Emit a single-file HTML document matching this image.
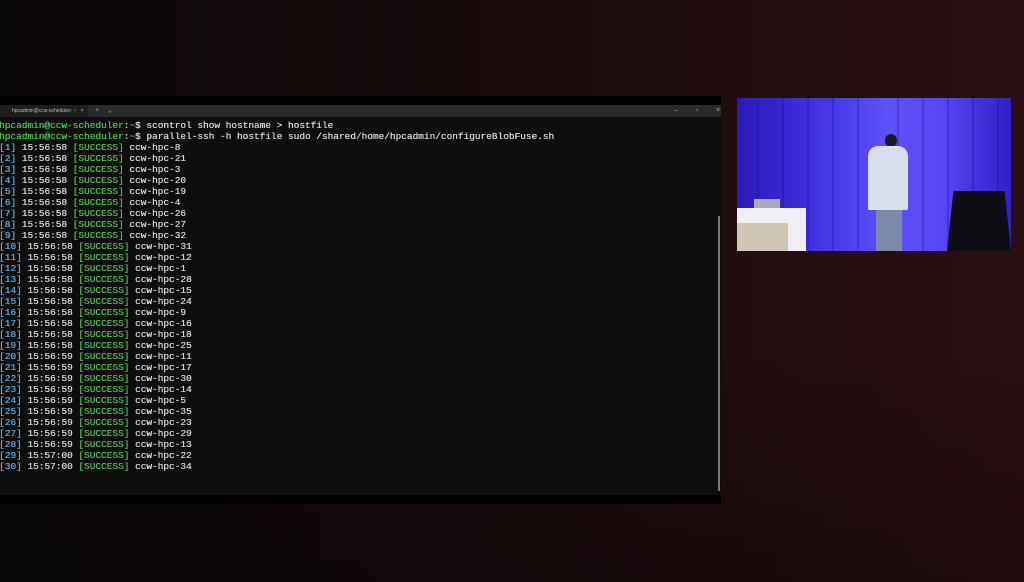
<!DOCTYPE html>
<html><head><meta charset="utf-8"><style>
html,body{margin:0;padding:0;width:1024px;height:582px;overflow:hidden;}
body{background:linear-gradient(90deg,#0a0707 0%,#150a0b 35%,#200d0f 65%,#2b0f12 100%);position:relative;font-family:"Liberation Mono",monospace;}
.shade{position:absolute;left:0;top:0;width:1024px;height:582px;background:linear-gradient(180deg,rgba(0,0,0,0) 60%,rgba(0,0,0,0.25) 100%);}
.term{position:absolute;left:0;top:96px;width:721px;height:408px;background:#000;}
.tabbar{position:absolute;left:0;top:9px;width:721px;height:12px;background:#2a2a2a;}
.tab{position:absolute;left:0;top:0;width:88px;height:12px;background:#1e1e1e;font:5px "Liberation Sans",sans-serif;color:#bbb;line-height:12px;padding-left:12px;box-sizing:border-box;}
.body{position:absolute;left:0;top:21px;width:721px;height:378px;background:#0e0e0e;}
pre{margin:0;position:absolute;left:-1px;top:3px;font-family:"Liberation Mono",monospace;font-size:9.45px;line-height:11px;color:#d4d4d4;text-shadow:0.3px 0 0 currentColor;}
.g{color:#4fb84f}.b{color:#5fa8d8}.pg{color:#3cc24a}
.sb{position:absolute;left:718px;width:2px;height:275px;background:#777;}
.vid{position:absolute;left:737px;top:98px;width:274px;height:153px;background:linear-gradient(90deg,#2a18b8,#3e2ee0 25%,#5e50fa 55%,#5646f4 75%,#3020c8);overflow:hidden;}
.ctn{position:absolute;top:0;bottom:0;width:2px;background:rgba(20,10,120,0.25);}
</style></head><body>
<div class="shade"></div>
<div class="term">
 <div class="tabbar"><div class="tab">hpcadmin@ccw-scheduler: ~ &nbsp;&nbsp;×</div>
 <span style="position:absolute;left:95px;top:0;font-size:7px;color:#aaa;line-height:12px;">+ &nbsp;⌄</span>
 <span style="position:absolute;left:674px;top:0;font-size:7px;color:#aaa;line-height:12px;">–&nbsp;&nbsp;&nbsp;&nbsp;▫&nbsp;&nbsp;&nbsp;&nbsp;×</span></div>
 <div class="body">
<pre><span class="pg">hpcadmin@ccw-scheduler</span>:<span class="b">~</span>$ scontrol show hostname &gt; hostfile
<span class="pg">hpcadmin@ccw-scheduler</span>:<span class="b">~</span>$ parallel-ssh -h hostfile sudo /shared/home/hpcadmin/configureBlobFuse.sh
<span class="b">[1]</span> 15:56:58 <span class="g">[SUCCESS]</span> ccw-hpc-8
<span class="b">[2]</span> 15:56:58 <span class="g">[SUCCESS]</span> ccw-hpc-21
<span class="b">[3]</span> 15:56:58 <span class="g">[SUCCESS]</span> ccw-hpc-3
<span class="b">[4]</span> 15:56:58 <span class="g">[SUCCESS]</span> ccw-hpc-20
<span class="b">[5]</span> 15:56:58 <span class="g">[SUCCESS]</span> ccw-hpc-19
<span class="b">[6]</span> 15:56:58 <span class="g">[SUCCESS]</span> ccw-hpc-4
<span class="b">[7]</span> 15:56:58 <span class="g">[SUCCESS]</span> ccw-hpc-26
<span class="b">[8]</span> 15:56:58 <span class="g">[SUCCESS]</span> ccw-hpc-27
<span class="b">[9]</span> 15:56:58 <span class="g">[SUCCESS]</span> ccw-hpc-32
<span class="b">[10]</span> 15:56:58 <span class="g">[SUCCESS]</span> ccw-hpc-31
<span class="b">[11]</span> 15:56:58 <span class="g">[SUCCESS]</span> ccw-hpc-12
<span class="b">[12]</span> 15:56:58 <span class="g">[SUCCESS]</span> ccw-hpc-1
<span class="b">[13]</span> 15:56:58 <span class="g">[SUCCESS]</span> ccw-hpc-28
<span class="b">[14]</span> 15:56:58 <span class="g">[SUCCESS]</span> ccw-hpc-15
<span class="b">[15]</span> 15:56:58 <span class="g">[SUCCESS]</span> ccw-hpc-24
<span class="b">[16]</span> 15:56:58 <span class="g">[SUCCESS]</span> ccw-hpc-9
<span class="b">[17]</span> 15:56:58 <span class="g">[SUCCESS]</span> ccw-hpc-16
<span class="b">[18]</span> 15:56:58 <span class="g">[SUCCESS]</span> ccw-hpc-18
<span class="b">[19]</span> 15:56:58 <span class="g">[SUCCESS]</span> ccw-hpc-25
<span class="b">[20]</span> 15:56:59 <span class="g">[SUCCESS]</span> ccw-hpc-11
<span class="b">[21]</span> 15:56:59 <span class="g">[SUCCESS]</span> ccw-hpc-17
<span class="b">[22]</span> 15:56:59 <span class="g">[SUCCESS]</span> ccw-hpc-30
<span class="b">[23]</span> 15:56:59 <span class="g">[SUCCESS]</span> ccw-hpc-14
<span class="b">[24]</span> 15:56:59 <span class="g">[SUCCESS]</span> ccw-hpc-5
<span class="b">[25]</span> 15:56:59 <span class="g">[SUCCESS]</span> ccw-hpc-35
<span class="b">[26]</span> 15:56:59 <span class="g">[SUCCESS]</span> ccw-hpc-23
<span class="b">[27]</span> 15:56:59 <span class="g">[SUCCESS]</span> ccw-hpc-29
<span class="b">[28]</span> 15:56:59 <span class="g">[SUCCESS]</span> ccw-hpc-13
<span class="b">[29]</span> 15:57:00 <span class="g">[SUCCESS]</span> ccw-hpc-22
<span class="b">[30]</span> 15:57:00 <span class="g">[SUCCESS]</span> ccw-hpc-34</pre>
 </div>
 <div class="sb" style="top:120px;"></div>
</div>
<div class="vid">
 <div class="ctn" style="left:20px"></div><div class="ctn" style="left:45px"></div><div class="ctn" style="left:70px"></div><div class="ctn" style="left:95px"></div><div class="ctn" style="left:120px"></div><div class="ctn" style="left:160px"></div><div class="ctn" style="left:185px"></div><div class="ctn" style="left:210px"></div><div class="ctn" style="left:235px"></div><div class="ctn" style="left:260px"></div>
 <div style="position:absolute;left:17px;top:101px;width:26px;height:10px;background:#a8a8b8;"></div>
 <div style="position:absolute;left:0;top:110px;width:69px;height:43px;background:#eeeef4;"></div>
 <div style="position:absolute;left:0;top:125px;width:51px;height:28px;background:#cfc6b4;"></div>
 <div style="position:absolute;left:148px;top:36px;width:12px;height:13px;border-radius:6px;background:#1a1a22;"></div>
 <div style="position:absolute;left:131px;top:48px;width:40px;height:64px;border-radius:10px 10px 2px 2px;background:#d8e0ec;"></div>
 <div style="position:absolute;left:139px;top:112px;width:26px;height:41px;background:#7a8aa8;"></div>
 <div style="position:absolute;left:210px;top:93px;width:64px;height:60px;background:#0e0e14;clip-path:polygon(10% 0,90% 0,100% 100%,0 100%);"></div>
</div>
</body></html>
